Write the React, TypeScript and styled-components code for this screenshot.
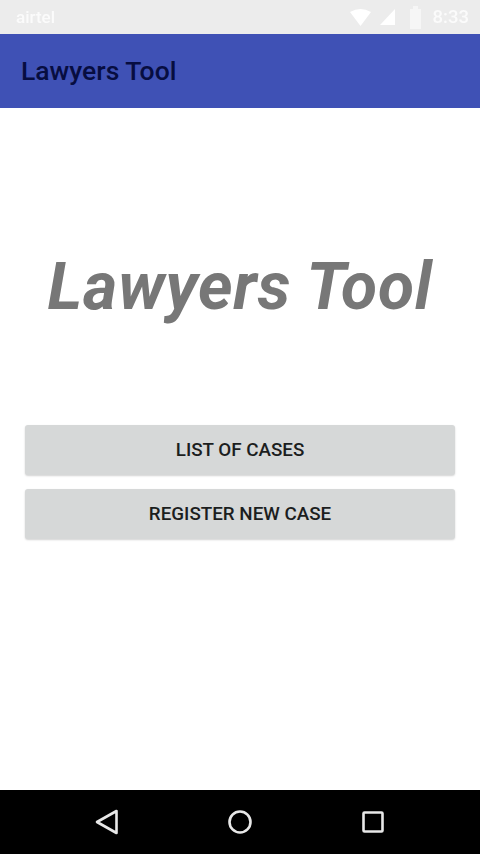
import React from 'react';
import styled, { createGlobalStyle } from 'styled-components';

const Global = createGlobalStyle`
  html, body { margin: 0; padding: 0; background: #fff; }
  body { font-family: Roboto, "Liberation Sans", sans-serif; }
`;

const Screen = styled.div`
  width: 480px;
  height: 854px;
  display: flex;
  flex-direction: column;
  overflow: hidden;
  background: #fff;
`;

const StatusBar = styled.div`
  height: 34px;
  box-sizing: border-box;
  background: #ececec;
  color: #fbfbfb;
  display: flex;
  align-items: center;
  justify-content: space-between;
  padding: 0 11px 0 16px;
  font-size: 17px;
  font-weight: 500;
`;

const Carrier = styled.span`
  filter: blur(0.5px);
`;

const StatusRight = styled.div`
  display: flex;
  align-items: center;
  filter: blur(0.5px);
`;

const StatusIcon = styled.svg<{ $gap: number }>`
  margin-right: ${p => p.$gap}px;
  fill: #fff;
`;

const Clock = styled.span`
  font-size: 18.5px;
`;

const AppBar = styled.header`
  height: 74px;
  box-sizing: border-box;
  background: #3f51b5;
  color: #070d40;
  display: flex;
  align-items: center;
  padding: 0 21px 1px;
  font-size: 26.5px;
  font-weight: 500;
`;

const Content = styled.main`
  flex: 1;
  display: flex;
  flex-direction: column;
  padding: 0 25px;
`;

const Title = styled.h1`
  margin: 141px 0 0;
  height: 76px;
  line-height: 76px;
  font-size: 66px;
  font-weight: 700;
  font-style: italic;
  letter-spacing: 0.7px;
  color: #777;
  text-align: center;
  white-space: nowrap;
`;

const Actions = styled.div`
  margin-top: 100px;
  display: flex;
  flex-direction: column;
  gap: 14px;
`;

const ActionButton = styled.button`
  height: 50px;
  border: none;
  border-radius: 3px;
  background: #d6d8d8;
  box-shadow: 0 1px 2px rgba(0, 0, 0, 0.18);
  color: #1c1e1e;
  font-family: inherit;
  font-size: 18.8px;
  font-weight: 500;
  padding: 0 0 1px;
`;

const NavBar = styled.nav`
  height: 64px;
  background: #000;
  display: flex;
  align-items: center;
  justify-content: space-between;
  padding: 0 94px;
  flex-shrink: 0;
`;

const NavIcon = styled.svg`
  width: 26px;
  height: 28px;
  fill: none;
  stroke: #e8e8e8;
  stroke-width: 2.6;
  stroke-linejoin: round;
`;

export default function App() {
  return (
    <Screen>
      <Global />
      <StatusBar>
        <Carrier>airtel</Carrier>
        <StatusRight>
          <StatusIcon $gap={9} width="21" height="17" viewBox="0 0 21 17">
            <path d="M0 3 Q10.5 -3 21 3 L10.5 17 Z" />
          </StatusIcon>
          <StatusIcon $gap={13} width="15" height="16" viewBox="0 0 15 16">
            <path d="M15 0 V16 H0 Z" />
          </StatusIcon>
          <StatusIcon $gap={10} width="15" height="23" viewBox="0 0 15 23">
            <path d="M5 0 H10 V3 H13 V23 H2 V3 H5 Z" fill="#f6f6f6" />
          </StatusIcon>
          <Clock>8:33</Clock>
        </StatusRight>
      </StatusBar>
      <AppBar>Lawyers Tool</AppBar>
      <Content>
        <Title>Lawyers Tool</Title>
        <Actions>
          <ActionButton>LIST OF CASES</ActionButton>
          <ActionButton>REGISTER NEW CASE</ActionButton>
        </Actions>
      </Content>
      <NavBar>
        <NavIcon viewBox="0 0 26 28">
          <path d="M22.5 3 V25 L3 14 Z" />
        </NavIcon>
        <NavIcon viewBox="0 0 26 28">
          <circle cx="13" cy="14" r="10.5" />
        </NavIcon>
        <NavIcon viewBox="0 0 26 28">
          <rect x="3.5" y="4.5" width="19" height="19" rx="1" />
        </NavIcon>
      </NavBar>
    </Screen>
  );
}
